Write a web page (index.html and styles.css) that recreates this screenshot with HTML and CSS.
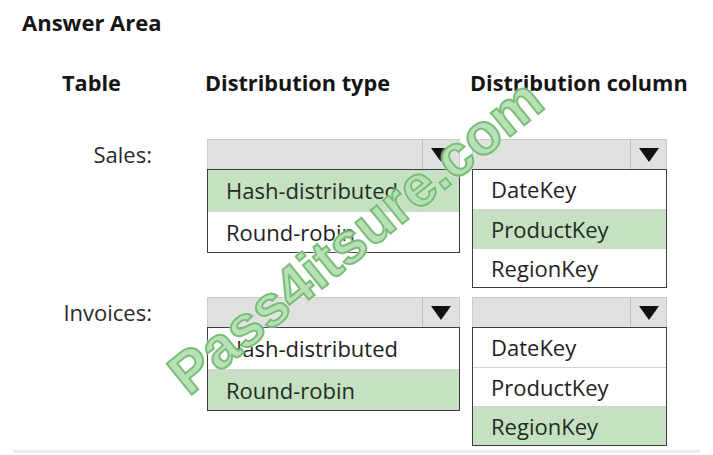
FILE: index.html
```html
<!DOCTYPE html>
<html lang="en">
<head>
    <meta charset="UTF-8">
    <title>Answer Area</title>
    <link rel="stylesheet" href="styles.css">
</head>
<body>
    <div class="answer-area">
        <h1 class="title">Answer Area</h1>

        <div class="rows">
            <!-- column headers -->
            <div class="row head">
                <div class="head-cell">Table</div>
                <div class="head-cell">Distribution type</div>
                <div class="head-cell">Distribution column</div>
            </div>

            <!-- Sales -->
            <div class="row">
                <div class="label">Sales:</div>
                <div class="select wide">
                    <div class="select-box"><div class="arrow-cell"><span class="arrow"></span></div></div>
                    <ul class="options">
                        <li class="opt picked">Hash-distributed</li>
                        <li class="opt">Round-robin</li>
                    </ul>
                </div>
                <div class="select narrow">
                    <div class="select-box"><div class="arrow-cell"><span class="arrow"></span></div></div>
                    <ul class="options">
                        <li class="opt">DateKey</li>
                        <li class="opt picked">ProductKey</li>
                        <li class="opt">RegionKey</li>
                    </ul>
                </div>
            </div>

            <!-- Invoices -->
            <div class="row">
                <div class="label">Invoices:</div>
                <div class="select wide">
                    <div class="select-box"><div class="arrow-cell"><span class="arrow"></span></div></div>
                    <ul class="options">
                        <li class="opt">Hash-distributed</li>
                        <li class="opt picked">Round-robin</li>
                    </ul>
                </div>
                <div class="select narrow">
                    <div class="select-box"><div class="arrow-cell"><span class="arrow"></span></div></div>
                    <ul class="options">
                        <li class="opt">DateKey</li>
                        <li class="opt">ProductKey</li>
                        <li class="opt picked">RegionKey</li>
                    </ul>
                </div>
            </div>
        </div>

        <div class="watermark">Pass4itsure.com</div>
    </div>
    <div class="bottom-line"></div>
</body>
</html>
```

FILE: styles.css
```css
body {
    margin: 0;
    background: #fff;
    font-family: "Open Sans", "Liberation Sans", sans-serif;
    color: #1c1c1c;
}
.answer-area {
    position: relative;
    padding: 8px 0 0 22px;
    height: 446px;
    box-sizing: border-box;
    overflow: hidden;
}
.title {
    margin: 0;
    font-size: 22px;
    font-weight: bold;
    line-height: 28px;
    color: #151515;
}
.rows {
    display: flex;
    flex-direction: column;
    margin: 33px 0 0 40px;
}
.row {
    display: grid;
    grid-template-columns: 133px 253px 195px;
    column-gap: 12px;
    margin-bottom: 9px;
}
.row.head {
    margin-bottom: 42px;
}
.head-cell {
    font-size: 21.7px;
    font-weight: bold;
    line-height: 28px;
    white-space: nowrap;
    color: #151515;
}
.head-cell + .head-cell {
    margin-left: -2px;
}
.label {
    text-align: right;
    padding-right: 43px;
    font-size: 22px;
    line-height: 30px;
    color: #2a2a2a;
}
.select-box {
    height: 30px;
    box-sizing: border-box;
    background: #e0e0e0;
    border: 1px solid #cbcbcb;
    border-bottom: none;
    display: flex;
    justify-content: flex-end;
}
.arrow-cell {
    width: 36px;
    border-left: 1px solid #bdbdbd;
    display: flex;
    align-items: center;
    justify-content: center;
}
.narrow .arrow-cell {
    width: 35px;
}
.arrow {
    width: 0;
    height: 0;
    border-left: 10px solid transparent;
    border-right: 10px solid transparent;
    border-top: 14px solid #111;
    margin-top: 1px;
}
.options {
    list-style: none;
    margin: 0;
    padding: 0;
    border: 1px solid #3c3c3c;
}
.opt {
    box-sizing: border-box;
    padding-left: 18px;
    font-size: 22px;
    color: #222;
    background: #fff;
}
.opt + .opt {
    border-top: 1px solid #d2d2d2;
}
.wide .opt {
    height: 41px;
    line-height: 40px;
}
.narrow .opt {
    height: 39px;
    line-height: 38px;
}
.opt.picked {
    background: #c6e0c2;
    color: #1d2e1d;
}
.watermark {
    position: absolute;
    left: 355px;
    top: 236px;
    transform: translate(-50%, -50%) rotate(-39deg);
    font-family: "Liberation Sans", sans-serif;
    font-weight: bold;
    font-size: 58px;
    white-space: nowrap;
    color: rgba(160, 214, 158, 0.75);
    -webkit-text-stroke: 2px rgba(105, 180, 105, 0.85);
    text-shadow: 0 0 3px #fff, 0 0 3px #fff;
    pointer-events: none;
}
.bottom-line {
    height: 3px;
    margin: 4px 13px 0;
    background: #ececec;
}
```
